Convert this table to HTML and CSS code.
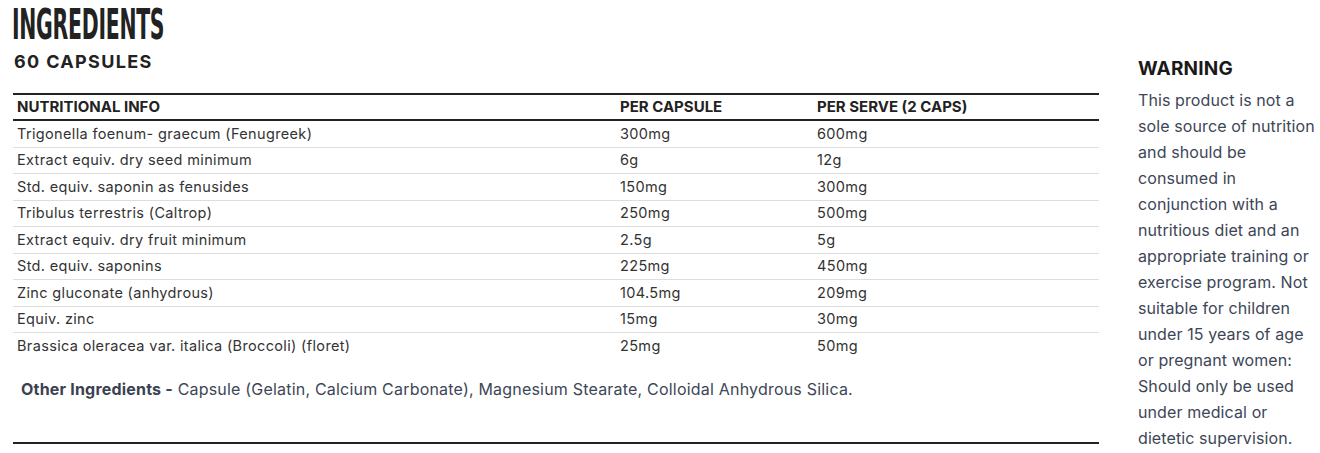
FILE: index.html
```html
<!DOCTYPE html>
<html>
<head>
<meta charset="utf-8">
<link rel="stylesheet" href="styles.css">
</head>
<body>
<div class="page">
  <main class="main">
    <h1 class="title"><span>INGREDIENTS</span></h1>
    <h2 class="sub">60 CAPSULES</h2>
    <table class="facts">
      <colgroup><col class="c1"><col class="c2"><col class="c3"></colgroup>
      <thead>
        <tr><th>NUTRITIONAL INFO</th><th>PER CAPSULE</th><th>PER SERVE (2 CAPS)</th></tr>
      </thead>
      <tbody>
        <tr><td>Trigonella foenum- graecum (Fenugreek)</td><td>300mg</td><td>600mg</td></tr>
        <tr><td>Extract equiv. dry seed minimum</td><td>6g</td><td>12g</td></tr>
        <tr><td>Std. equiv. saponin as fenusides</td><td>150mg</td><td>300mg</td></tr>
        <tr><td>Tribulus terrestris (Caltrop)</td><td>250mg</td><td>500mg</td></tr>
        <tr><td>Extract equiv. dry fruit minimum</td><td>2.5g</td><td>5g</td></tr>
        <tr><td>Std. equiv. saponins</td><td>225mg</td><td>450mg</td></tr>
        <tr><td>Zinc gluconate (anhydrous)</td><td>104.5mg</td><td>209mg</td></tr>
        <tr><td>Equiv. zinc</td><td>15mg</td><td>30mg</td></tr>
        <tr><td>Brassica oleracea var. italica (Broccoli) (floret)</td><td>25mg</td><td>50mg</td></tr>
      </tbody>
    </table>
    <p class="other"><strong>Other Ingredients -</strong> Capsule (Gelatin, Calcium Carbonate), Magnesium Stearate, Colloidal Anhydrous Silica.</p>
    <hr class="rule">
  </main>
  <aside class="warning">
    <h3>WARNING</h3>
    <p>This product is not a sole source of nutrition and should be consumed in conjunction with a nutritious diet and an appropriate training or exercise program. Not suitable for children under 15 years of age or pregnant women: Should only be used under medical or dietetic supervision.</p>
  </aside>
</div>
</body>
</html>
```

FILE: styles.css
```css
html, body {
  margin: 0;
  padding: 0;
  background: #fff;
}
body {
  font-family: Inter, "Liberation Sans", Arial, sans-serif;
  color: #222;
}
.page {
  display: flex;
  padding-left: 13px;
  width: 1320px;
  box-sizing: border-box;
}
.main {
  width: 1086px;
  flex: none;
}
.title {
  margin: 0;
  padding-top: 3px;
  height: 43px;
  font-family: "DejaVu Sans Condensed", "DejaVu Sans", sans-serif;
  font-weight: 700;
  font-size: 42px;
  line-height: 44px;
  color: #222;
  letter-spacing: -0.5px;
}
.title span {
  display: inline-block;
  transform: scaleX(0.54);
  transform-origin: left center;
  margin-left: -1px;
}
.sub {
  margin: 5px 0 0 1px;
  font-size: 18px;
  font-weight: 700;
  line-height: 22px;
  color: #222;
  letter-spacing: 1.35px;
}
.facts {
  margin-top: 20px;
  width: 100%;
  border-collapse: collapse;
  table-layout: fixed;
  font-size: 14.5px;
}
.c1 { width: 603px; }
.c2 { width: 197px; }
.facts th {
  text-align: left;
  font-weight: 700;
  font-size: 15px;
  line-height: 20px;
  padding: 2px 4px 2px;
  color: #222;
  border-top: 2px solid #222;
  border-bottom: 2px solid #222;
}
.facts td {
  padding: 2.75px 4px;
  line-height: 20px;
  color: #333;
  letter-spacing: 0.35px;
  border-bottom: 1px solid #ddd;
}
.facts tbody tr:last-child td {
  border-bottom: none;
}
.other {
  margin: 19px 0 0 8px;
  font-size: 16px;
  line-height: 22px;
  color: #3c4656;
  letter-spacing: 0.2px;
}
.other strong {
  font-weight: 700;
  letter-spacing: 0.2px;
  color: #3a4252;
}
.rule {
  margin: 42px 0 0 0;
  border: none;
  border-top: 2px solid #222;
  height: 0;
}
.warning {
  margin-left: 39px;
  width: 182px;
  padding-top: 57px;
}
.warning h3 {
  margin: 0;
  font-size: 19px;
  line-height: 24px;
  font-weight: 700;
  color: #1a1a1a;
  letter-spacing: 0.2px;
}
.warning p {
  margin: 6px 0 0;
  font-size: 16px;
  line-height: 26px;
  color: #3c4656;
  letter-spacing: 0.1px;
}
```
